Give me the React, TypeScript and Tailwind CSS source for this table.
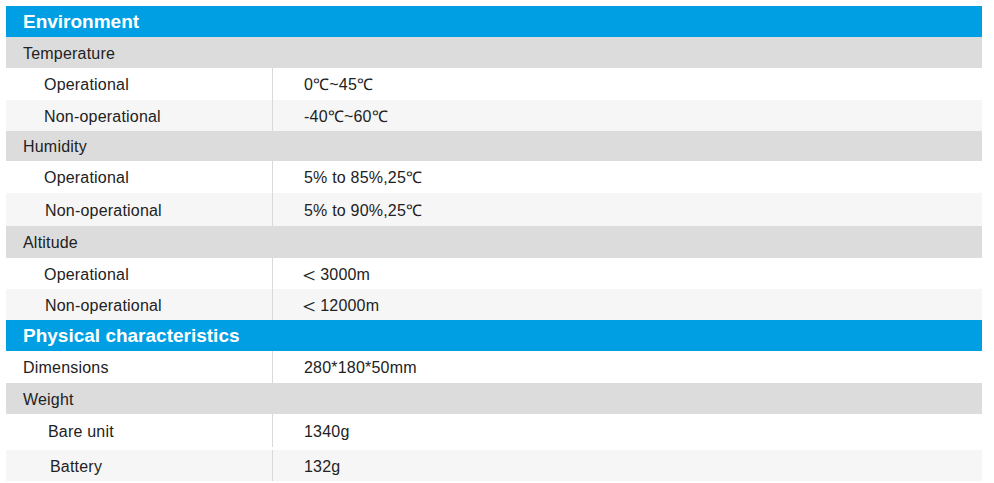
import React from "react";

type Row =
  | { kind: "head"; text: string; h: string }
  | { kind: "group"; text: string; h: string }
  | { kind: "item"; label: React.ReactNode; value: React.ReactNode; h: string; bg: string; indent: string };

const lt = (v: string) => (
  <>
    <span className="-ml-[6px] mr-[0px] text-[22px] leading-none font-light">＜</span>
    {v}
  </>
);

const rows: Row[] = [
  { kind: "head", text: "Environment", h: "h-[31px]" },
  { kind: "group", text: "Temperature", h: "h-[31px]" },
  { kind: "item", label: "Operational", value: "0℃~45℃", h: "h-[32px]", bg: "bg-white", indent: "pl-[38px]" },
  { kind: "item", label: "Non-operational", value: "-40℃~60℃", h: "h-[31px]", bg: "bg-[#f6f6f6]", indent: "pl-[38px]" },
  { kind: "group", text: "Humidity", h: "h-[30px]" },
  { kind: "item", label: "Operational", value: "5% to 85%,25℃", h: "h-[32px]", bg: "bg-white", indent: "pl-[38px]" },
  { kind: "item", label: "Non-operational", value: "5% to 90%,25℃", h: "h-[33px]", bg: "bg-[#f6f6f6]", indent: "pl-[39px]" },
  { kind: "group", text: "Altitude", h: "h-[32px]" },
  { kind: "item", label: "Operational", value: lt("3000m"), h: "h-[31px]", bg: "bg-white", indent: "pl-[38px]" },
  { kind: "item", label: "Non-operational", value: lt("12000m"), h: "h-[31px]", bg: "bg-[#f6f6f6]", indent: "pl-[39px]" },
  { kind: "head", text: "Physical characteristics", h: "h-[31px]" },
  { kind: "item", label: "Dimensions", value: "280*180*50mm", h: "h-[32px]", bg: "bg-white", indent: "pl-[17px]" },
  { kind: "group", text: "Weight", h: "h-[31px]" },
  { kind: "item", label: "Bare unit", value: "1340g", h: "h-[36px] pb-[3px]", bg: "bg-white", indent: "pl-[42px]" },
  { kind: "item", label: "Battery", value: "132g", h: "h-[31px]", bg: "bg-[#f6f6f6]", indent: "pl-[44px]" },
];

export default function App() {
  return (
    <div className="w-[994px] h-[483px] bg-white pt-[6px] pl-[6px] text-[#222] font-['Liberation_Sans',Arial,sans-serif]">
      <div className="flex flex-col w-[976px]">
        {rows.map((r, i) => {
          if (r.kind === "head") {
            return (
              <div
                key={i}
                className={`flex items-center ${r.h} pt-[2px] bg-[#009fe3] pl-[17px] text-white font-bold text-[19px]`}
              >
                {r.text}
              </div>
            );
          }
          if (r.kind === "group") {
            return (
              <div
                key={i}
                className={`flex items-center ${r.h} pt-[2px] bg-[#dcdcdc] pl-[17px] text-[16px] tracking-[0.2px]`}
              >
                {r.text}
              </div>
            );
          }
          return (
            <div key={i} className={`flex ${r.h} ${r.bg}`}>
              <div className={`w-[266px] flex items-center pt-[2px] ${r.indent} text-[16px] tracking-[0.2px]`}>
                {r.label}
              </div>
              <div className="flex-1 flex items-center pt-[2px] border-l border-[#d9d9d9] pl-[31px] text-[16px] tracking-[0.2px]">
                {r.value}
              </div>
            </div>
          );
        })}
      </div>
    </div>
  );
}
